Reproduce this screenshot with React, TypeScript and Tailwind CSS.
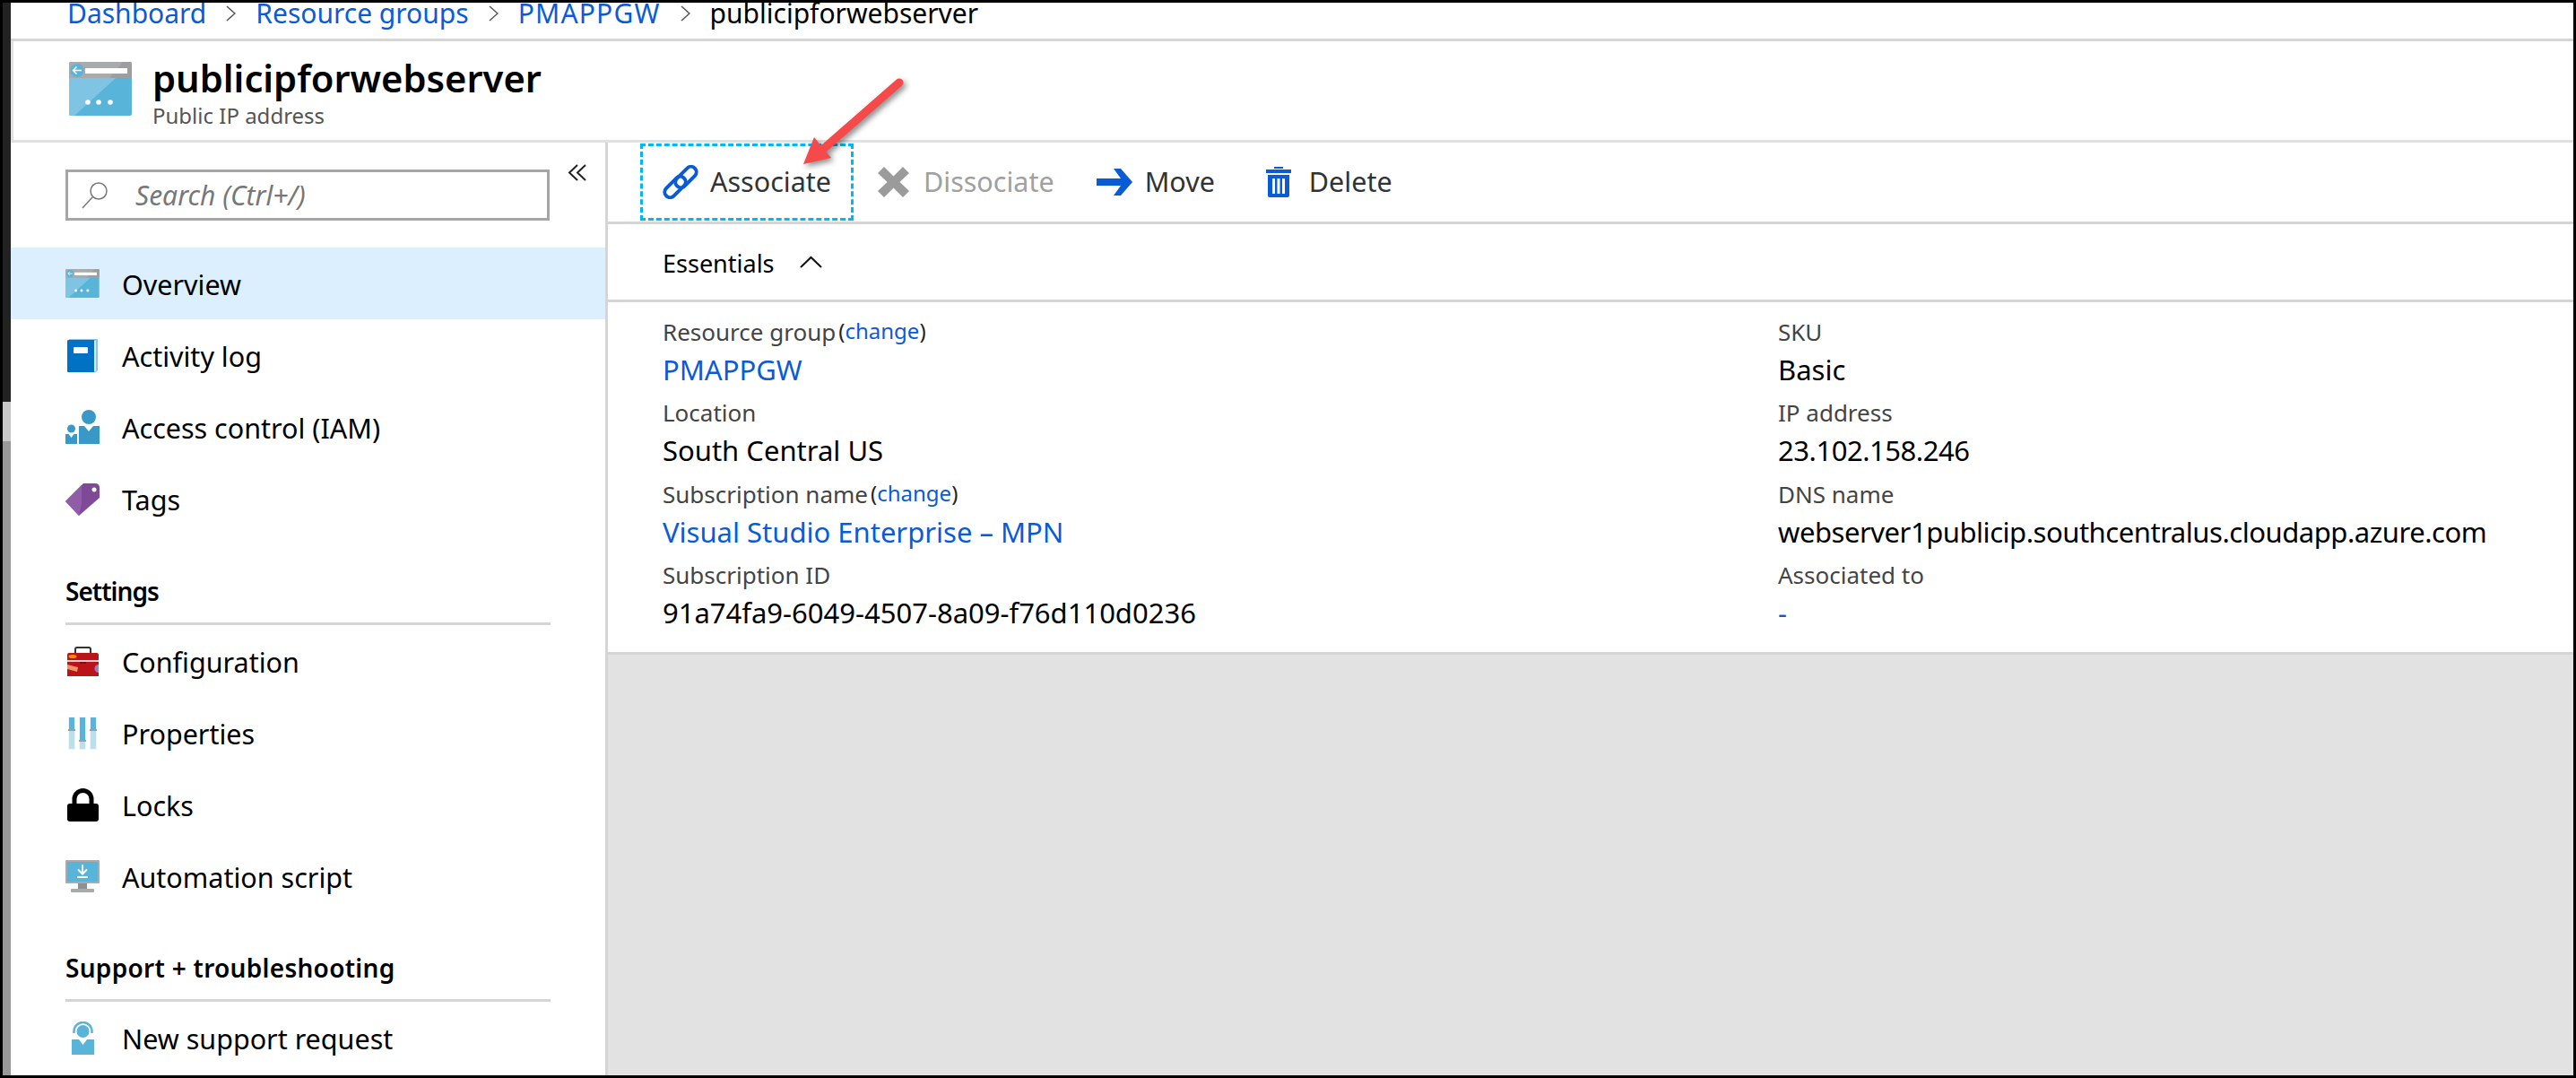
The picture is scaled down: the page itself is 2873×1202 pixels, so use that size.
import type { ReactNode } from 'react';

function WindowIcon({ className }: { className: string }) {
  return (
    <svg viewBox="0 0 70 60" className={className}>
      <rect width="70" height="60" rx="2" fill="#59b4d9" />
      <path d="M0 18H52L6 60H2Q0 60 0 58Z" fill="#7fc4e2" />
      <path d="M0 18V2Q0 0 2 0H68Q70 0 70 2V18Z" fill="#a9aaac" />
      <path d="M60 0H68Q70 0 70 2V18H45Z" fill="#9d9ea0" />
      <rect x="18" y="7" width="47" height="6" fill="#fff" />
      <circle cx="9" cy="9.5" r="7.5" fill="#59b4d9" />
      <path d="M14 9.5H5M8.5 5.5L4.5 9.5L8.5 13.5" stroke="#fff" strokeWidth="1.5" fill="none" />
      <circle cx="21" cy="45" r="2.8" fill="#fff" />
      <circle cx="33" cy="45" r="2.8" fill="#fff" />
      <circle cx="46" cy="45" r="2.8" fill="#fff" />
    </svg>
  );
}

function BookIcon() {
  return (
    <svg viewBox="0 0 34 37" className="h-[37px] w-[34px]">
      <path d="M2 0H34V35L32 37H2Z" fill="#8fc4e8" />
      <path d="M30 2H32V36H30Z" fill="#dfe9f0" />
      <path d="M0 2Q0 1 2 1H30V37H1Q0 37 0 36Z" fill="#0072c6" />
      <rect x="7" y="9" width="16" height="7" rx="1" fill="#fff" />
    </svg>
  );
}

function PeopleIcon() {
  return (
    <svg viewBox="0 0 38 38" className="h-[38px] w-[38px]">
      <circle cx="26" cy="8" r="8" fill="#3999c6" />
      <path d="M15 18H21L26 24L31 18H38V38H15Z" fill="#3999c6" />
      <circle cx="6.500" cy="21" r="4.500" fill="#3999c6" />
      <path d="M0 27H3.500L6.500 31L9.500 27H13V38H0Z" fill="#3999c6" />
    </svg>
  );
}

function TagIcon() {
  return (
    <svg viewBox="0 0 38 37" className="h-[37px] w-[38px]">
      <path d="M0 21L20 1H33Q38 1 38 6V17L15 37Z" fill="#804998" />
      <path d="M0 21L18 3L18 24L15 37Z" fill="#915ca8" />
      <circle cx="32" cy="8" r="2.500" fill="#fff" />
    </svg>
  );
}

function ToolboxIcon() {
  return (
    <svg viewBox="0 0 35 33" className="h-[33px] w-[35px]">
      <path d="M9 8V3Q9 1 11 1H24Q26 1 26 3V8" stroke="#333" strokeWidth="2" fill="none" />
      <path d="M0 9Q0 7 2 7H33Q35 7 35 9V33H0Z" fill="#ba141a" />
      <rect y="15" width="35" height="2" fill="#e8c9c9" />
      <rect x="14" y="17" width="7" height="2" fill="#7a1014" />
      <ellipse cx="6" cy="11" rx="4.500" ry="2" fill="#ff8c00" />
      <path d="M0 20L12 23L11 28L0 25Z" fill="#f0926a" />
      <path d="M35 20A4 4 0 0 0 35 29Z" fill="#a67cc0" />
    </svg>
  );
}

function SlidersIcon() {
  return (
    <svg viewBox="0 0 32 37" className="h-[37px] w-[32px]">
      <g fill="#eef5f8">
        <rect width="8" height="37" />
        <rect x="12" width="8" height="37" />
        <rect x="24" width="8" height="37" />
      </g>
      <g fill="#bcdfee">
        <rect x="1" y="1" width="6" height="35" />
        <rect x="13" y="1" width="6" height="35" />
        <rect x="25" y="1" width="6" height="35" />
      </g>
      <g fill="#59b4d9">
        <rect x="1" y="1" width="6" height="13" />
        <rect x="13" y="1" width="6" height="25" />
        <rect x="25" y="1" width="6" height="13" />
      </g>
      <g fill="#9d9ea0">
        <rect y="14" width="8" height="2" />
        <rect x="12" y="26" width="8" height="2" />
        <rect x="24" y="14" width="8" height="2" />
      </g>
    </svg>
  );
}

function LockIcon() {
  return (
    <svg viewBox="0 0 35 37" className="h-[37px] w-[35px]">
      <path d="M8 18V12A9.500 9.500 0 0 1 27 12V18" stroke="#000" strokeWidth="5" fill="none" />
      <rect y="17" width="35" height="20" rx="3" fill="#000" />
    </svg>
  );
}

function MonitorIcon() {
  return (
    <svg viewBox="0 0 38 36" className="h-[36px] w-[38px]">
      <rect width="38" height="26" rx="1" fill="#a9aaac" />
      <rect x="2" y="2" width="34" height="22" fill="#59b4d9" />
      <path d="M19 5V15M14 10.500L19 15.500L24 10.500" stroke="#fff" strokeWidth="2" fill="none" />
      <rect x="13" y="18" width="12" height="2" fill="#fff" />
      <rect x="14" y="26" width="10" height="6" fill="#8f9092" />
      <rect x="6" y="32" width="26" height="4" rx="1" fill="#a9aaac" />
    </svg>
  );
}

function SupportIcon() {
  return (
    <svg viewBox="0 0 25 37" className="h-[37px] w-[25px]">
      <path d="M2.500 13V11A10 10 0 0 1 22.500 11V13" stroke="#59b4d9" strokeWidth="2.500" fill="none" />
      <circle cx="12.500" cy="11" r="7" fill="#59b4d9" />
      <path d="M0 20H8L12.500 26L17 20H25V37H0Z" fill="#59b4d9" />
    </svg>
  );
}

// two interlocked capsules on the diagonal
function LinkIcon() {
  return (
    <svg viewBox="0 0 40 38" className="h-[38px] w-[40px]" fill="none" stroke="#0a5bd6" strokeWidth="4">
      <rect x="12" y="7.500" width="28" height="12" rx="6" transform="rotate(-45 26 13.500)" />
      <rect x="0" y="18.500" width="28" height="12" rx="6" transform="rotate(-45 14 24.500)" />
    </svg>
  );
}

function CrossIcon() {
  return (
    <svg viewBox="0 0 35 34" className="h-[34px] w-[35px]">
      <path d="M7 0L17.500 10.500L28 0L35 7L24.500 17L35 27L28 34L17.500 23.500L7 34L0 27L10.500 17L0 7Z" fill="#9b9b9b" />
    </svg>
  );
}

function MoveArrow() {
  return (
    <svg viewBox="0 0 40 30" className="h-[30px] w-[40px]">
      <path d="M0 11H27L19 0H27L40 15L27 30H19L27 19H0Z" fill="#0a5bd6" />
    </svg>
  );
}

function TrashIcon() {
  return (
    <svg viewBox="0 0 28 34" className="h-[34px] w-[28px]" fill="#0a5bd6">
      <rect x="9" width="10" height="2" />
      <rect y="3" width="28" height="4" />
      <path d="M2 9H26V32Q26 34 24 34H4Q2 34 2 32ZM7 13V30H10V13ZM12.500 13V30H15.500V13ZM18 13V30H21V13Z" fillRule="evenodd" />
    </svg>
  );
}

function Crumb() {
  return (
    <svg viewBox="0 0 11 18" className="mx-[22px] h-[18px] w-[11px] shrink-0" fill="none" stroke="#555" strokeWidth="1.500">
      <path d="M1 1L10 9L1 17" />
    </svg>
  );
}

function NavRow({ icon, label, active }: { icon: ReactNode; label: string; active?: boolean }) {
  return (
    <div className={`flex h-20 items-center pl-[61px] ${active ? 'bg-[#dcefff]' : ''}`}>
      <div className="flex w-[38px] justify-center">{icon}</div>
      <span className="ml-[25px] pt-[4px]">{label}</span>
    </div>
  );
}

function NavSection({ title, className }: { title: string; className: string }) {
  return (
    <div className={`mx-[61px] flex items-end border-b-[3px] border-[#d5d5d5] pb-[16px] text-[28px] font-semibold leading-[38px] ${className}`}>
      {title}
    </div>
  );
}

function Field({ label, change, value, link, valueClass }: { label: string; change?: boolean; value: string; link?: boolean; valueClass?: string }) {
  return (
    <div className="h-[90.300px]">
      <div className="flex h-[42px] items-baseline text-[26px] leading-[42px] text-[#444]">
        {label}
        {change && (
          <span className="ml-[3px] -translate-y-[2px] text-[24px] text-[#222]">
            (<span className="text-[#0a5bd6]">change</span>)
          </span>
        )}
      </div>
      <div className={`h-[42px] text-[31px] leading-[42px] ${link ? 'text-[#0a5bd6]' : 'text-black'} ${valueClass ?? ''}`}>{value}</div>
    </div>
  );
}

function ToolbarItem({ icon, label, muted, className }: { icon: ReactNode; label: string; muted?: boolean; className: string }) {
  return (
    <div className={`flex items-center ${className}`}>
      {icon}
      <span className={muted ? 'text-[#a0a0a0]' : 'text-[#333]'}>{label}</span>
    </div>
  );
}

export default function App() {
  return (
    <div className="relative flex h-[1202px] w-[2873px] overflow-hidden bg-black py-[3px] pr-[3px] font-['Noto_Sans',sans-serif] text-[30.500px]">
      <div className="flex w-[12px] flex-col pl-[3px]">
        <div className="h-[445px] bg-[#222]" />
        <div className="h-[44px] bg-[#c8c8c8]" />
        <div className="flex-1 bg-[#999]" />
      </div>

      <div className="flex min-w-0 flex-1 flex-col">
        <div className="h-[43px] overflow-hidden border-b-[3px] border-[#d5d5d5] bg-white text-[30px]">
          <div className="-mt-[12px] flex items-center pl-[63px] leading-[48px]">
            <span className="text-[#0a5bd6]">Dashboard</span>
            <Crumb />
            <span className="text-[#0a5bd6]">Resource groups</span>
            <Crumb />
            <span className="tracking-[0.04em] text-[#0a5bd6]">PMAPPGW</span>
            <Crumb />
            <span className="text-black">publicipforwebserver</span>
          </div>
        </div>

        <div className="flex h-[113px] items-start border-b-[3px] border-l-[3px] border-[#e0e0e0] bg-white pl-[62px] pt-[23px]">
          <WindowIcon className="h-[60px] w-[70px]" />
          <div className="ml-[23px] -mt-[7px]">
            <div className="text-[41.700px] font-semibold leading-[50px] text-black">publicipforwebserver</div>
            <div className="mt-[2px] text-[24px] leading-[30px] text-[#555]">Public IP address</div>
          </div>
        </div>

        <div className="flex min-h-0 flex-1">
          <aside className="w-[666px] shrink-0 overflow-hidden border-r-[3px] border-[#d5d5d5] bg-white">
            <div className="flex h-[117px] items-start pl-[61px] pt-[30px]">
              <div className="flex h-[57px] w-[540px] items-center border-[3px] border-[#a6a6a6] pl-[15px]">
                <svg viewBox="0 0 30 30" className="h-[30px] w-[30px] shrink-0" fill="none" stroke="#777" strokeWidth="1.500">
                  <circle cx="19" cy="10" r="9" />
                  <path d="M12 17L1 29" />
                </svg>
                <span className="ml-[30px] text-[30px] italic text-[#777]">Search (Ctrl+/)</span>
              </div>
              <svg viewBox="0 0 21 19" className="ml-[20px] -mt-[6px] h-[19px] w-[21px]" fill="none" stroke="#222" strokeWidth="2">
                <path d="M11 1L2 9.500L11 18M20 1L11 9.500L20 18" />
              </svg>
            </div>
            <NavRow active icon={<WindowIcon className="h-[32px] w-[38px]" />} label="Overview" />
            <NavRow icon={<BookIcon />} label="Activity log" />
            <NavRow icon={<PeopleIcon />} label="Access control (IAM)" />
            <NavRow icon={<TagIcon />} label="Tags" />
            <NavSection title="Settings" className="h-[101px] tracking-[-0.035em]" />
            <NavRow icon={<ToolboxIcon />} label="Configuration" />
            <NavRow icon={<SlidersIcon />} label="Properties" />
            <NavRow icon={<LockIcon />} label="Locks" />
            <NavRow icon={<MonitorIcon />} label="Automation script" />
            <NavSection title="Support + troubleshooting" className="h-[100px] tracking-[0.01em]" />
            <NavRow icon={<SupportIcon />} label="New support request" />
          </aside>

          <main className="flex min-w-0 flex-1 flex-col bg-[#e2e2e2]">
            <div className="flex h-[91px] items-center border-b-[3px] border-[#d5d5d5] bg-white pl-[36px]">
              <ToolbarItem className="h-[86px] w-[238px] gap-[13px] border-[3px] border-dashed border-[#00b7f1] pl-[22px]" icon={<LinkIcon />} label="Associate" />
              <ToolbarItem className="ml-[27px] gap-[16px]" muted icon={<CrossIcon />} label="Dissociate" />
              <ToolbarItem className="ml-[47px] gap-[14px]" icon={<MoveArrow />} label="Move" />
              <ToolbarItem className="ml-[57px] gap-[20px]" icon={<TrashIcon />} label="Delete" />
            </div>
            <div className="flex h-[87px] items-center border-b-[3px] border-[#d5d5d5] bg-white pl-[61px] text-[27px] text-black">
              <span className="pt-[4px]">Essentials</span>
              <svg viewBox="0 0 25 14" className="ml-[28px] h-[14px] w-[25px]" fill="none" stroke="#111" strokeWidth="2">
                <path d="M1 13L12.500 2L24 13" />
              </svg>
            </div>
            <div className="grid h-[393px] grid-cols-[1244px_1fr] border-b-[3px] border-[#d5d5d5] bg-white pl-[61px] pt-[12px]">
              <div>
                <Field label="Resource group" change value="PMAPPGW" link />
                <Field label="Location" value="South Central US" />
                <Field label="Subscription name" change value="Visual Studio Enterprise – MPN" link />
                <Field label="Subscription ID" value="91a74fa9-6049-4507-8a09-f76d110d0236" />
              </div>
              <div>
                <Field label="SKU" value="Basic" />
                <Field label="IP address" value="23.102.158.246" valueClass="tracking-[-0.015em]" />
                <Field label="DNS name" value="webserver1publicip.southcentralus.cloudapp.azure.com" valueClass="tracking-[-0.015em]" />
                <Field label="Associated to" value="-" link />
              </div>
            </div>
          </main>
        </div>
      </div>

      <svg viewBox="0 0 140 120" className="absolute left-[880px] top-[80px] h-[120px] w-[140px] drop-shadow-[3px_3px_3px_rgba(0,0,0,0.45)]">
        <path d="M123 12L36 88" stroke="#f64a4a" strokeWidth="9" strokeLinecap="round" />
        <path d="M16 103L28 73L47 96Z" fill="#f64a4a" />
      </svg>
    </div>
  );
}
